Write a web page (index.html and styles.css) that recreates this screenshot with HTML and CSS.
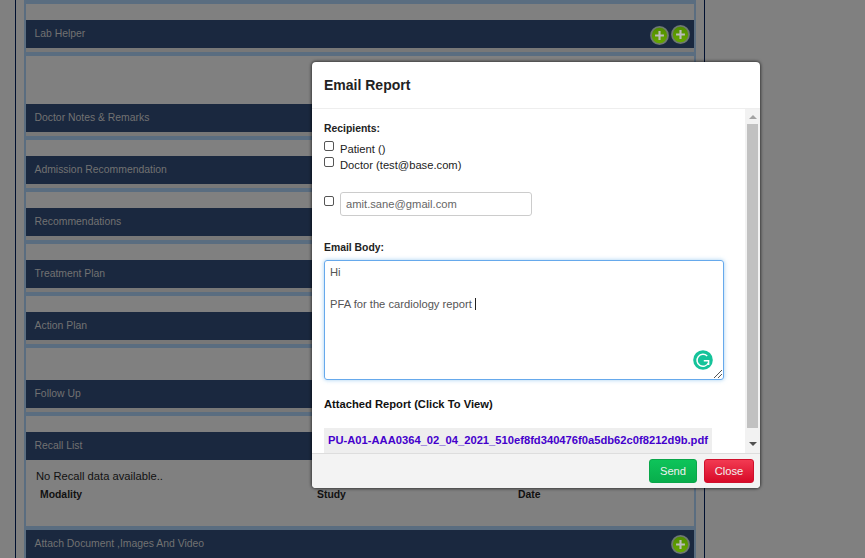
FILE: index.html
```html
<!DOCTYPE html>
<html lang="en">
<head>
<meta charset="utf-8">
<title>Email Report</title>
<link rel="stylesheet" href="styles.css">
</head>
<body>
<svg class="defs" width="0" height="0" aria-hidden="true">
  <defs>
    <linearGradient id="plusFill" x1="0" y1="0" x2="0" y2="1">
      <stop offset="0" stop-color="#4f8c00"/>
      <stop offset="1" stop-color="#68a800"/>
    </linearGradient>
    <symbol id="plus" viewBox="0 0 18 18">
      <circle cx="9" cy="9" r="8.1" fill="url(#plusFill)" stroke="#6f7a70" stroke-width="1.6"/>
      <path d="M9 4.8v8.4M4.8 9h8.4" stroke="#bcbcbc" stroke-width="2" fill="none"/>
    </symbol>
  </defs>
</svg>
<div class="page">
  <main class="sheet">
    <section class="section">
      <div class="bar bar-first"><span>Lab Helper</span><span class="icons"><svg class="plus plus-low"><use href="#plus"/></svg><svg class="plus"><use href="#plus"/></svg></span></div>
      <div class="strip"></div>
    </section>
    <section class="section gap-48">
      <div class="bar"><span>Doctor Notes &amp; Remarks</span></div>
      <div class="strip"></div>
    </section>
    <section class="section gap-16">
      <div class="bar"><span>Admission Recommendation</span></div>
      <div class="strip"></div>
    </section>
    <section class="section gap-16">
      <div class="bar"><span>Recommendations</span></div>
      <div class="strip"></div>
    </section>
    <section class="section gap-16">
      <div class="bar"><span>Treatment Plan</span></div>
      <div class="strip"></div>
    </section>
    <section class="section gap-16">
      <div class="bar"><span>Action Plan</span></div>
      <div class="strip"></div>
    </section>
    <section class="section gap-32">
      <div class="bar"><span>Follow Up</span></div>
      <div class="strip"></div>
    </section>
    <section class="section gap-16">
      <div class="bar"><span>Recall List</span></div>
      <div class="recall">
        <p class="recall-note">No Recall data available..</p>
        <div class="recall-head"><span>Modality</span><span>Study</span><span>Date</span></div>
      </div>
    </section>
    <section class="section-last">
      <div class="bar"><span>Attach Document ,Images And Video</span><span class="icons"><svg class="plus"><use href="#plus"/></svg></span></div>
    </section>
  </main>
</div>
<div class="modal">
  <header class="modal-header"><h2>Email Report</h2></header>
  <div class="modal-middle">
    <div class="modal-body">
      <div class="label">Recipients:</div>
      <label class="check"><input type="checkbox"><span>Patient ()</span></label>
      <label class="check"><input type="checkbox"><span>Doctor (test@base.com)</span></label>
      <div class="other"><input type="checkbox"><div class="email">amit.sane@gmail.com</div></div>
      <div class="label label-body">Email Body:</div>
      <div class="textarea">
        <div class="line">Hi</div>
        <div class="line">&nbsp;</div>
        <div class="line">PFA for the cardiology report<i class="caret"></i></div>
        <svg class="grammarly" viewBox="0 0 20 20" aria-hidden="true">
          <circle cx="10" cy="10" r="9.8" fill="#15c39a"/>
          <path d="M14.2 6A6 6 0 1 0 15.4 13" fill="none" stroke="#fff" stroke-width="1.5"/>
          <path d="M10.8 10.8H15.6V15" fill="none" stroke="#fff" stroke-width="1.5"/>
        </svg>
        <svg class="grip" viewBox="0 0 9 9" aria-hidden="true">
          <path d="M1 9L9 1M5 9L9 5" stroke="#555" stroke-width="1"/>
        </svg>
      </div>
      <div class="attached">Attached Report (Click To View)</div>
      <div class="file"><a href="#">PU-A01-AAA0364_02_04_2021_510ef8fd340476f0a5db62c0f8212d9b.pdf</a></div>
    </div>
    <div class="scrollbar">
      <i class="arrow-up"></i>
      <div class="thumb"></div>
      <i class="arrow-down"></i>
    </div>
  </div>
  <footer class="modal-footer">
    <button class="btn btn-send" type="button">Send</button>
    <button class="btn btn-close" type="button">Close</button>
  </footer>
</div>
</body>
</html>
```
FILE: styles.css
```css
* { box-sizing: border-box; }
html, body { margin: 0; height: 100%; overflow: hidden; }
body { background: #808080; font-family: "Liberation Sans", Arial, sans-serif; }
.defs { position: absolute; }
.page {
  width: 690px;
  height: 558px;
  margin-left: 15px;
  padding: 0 8px;
  border-left: 1px solid #001030;
  border-right: 1px solid #001030;
  overflow: hidden;
}
.sheet {
  width: 672px;
  height: 558px;
  border: 2px solid #5a6d80;
  border-top: 4px solid #5a6d80;
  border-bottom: 0;
}
.section { border-bottom: 4px solid #5a6d80; }
.bar {
  display: flex;
  align-items: center;
  justify-content: space-between;
  height: 28px;
  padding: 0 0 0 8.5px;
  background: #1a283f;
  color: #727272;
  font-size: 10.4px;
}
.bar > span:first-child { position: relative; top: -1px; }
.bar-first { margin-top: 16px; }
.gap-16 { margin-top: 16px; }
.gap-32 { margin-top: 32px; }
.gap-48 { margin-top: 48px; }
.strip { height: 4px; background: #787878; }
.icons { display: flex; align-items: center; gap: 2px; padding-right: 4px; }
.plus { display: block; width: 19px; height: 19px; }
.plus-low { position: relative; top: 1px; }
.recall { height: 66px; padding: 8px 0 0 10px; color: #111; font-size: 11.2px; }
.recall-note { margin: 0; height: 16px; line-height: 16px; font-size: 11.2px; }
.recall-head {
  display: grid;
  grid-template-columns: 277px 201px 1fr;
  padding: 4px 0 0 4px;
  font-size: 10.4px;
  font-weight: bold;
  line-height: 14px;
}
.modal {
  position: absolute;
  left: 312px;
  top: 62px;
  width: 448px;
  height: 426px;
  display: flex;
  flex-direction: column;
  background: #fff;
  border-radius: 4px;
  box-shadow: 0 0 3px 1px rgba(0, 0, 0, .55);
  overflow: hidden;
}
.modal-header { flex: none; height: 47px; padding: 0 12px; border-bottom: 1px solid #eee; display: flex; align-items: center; }
.modal-header h2 { margin: 0; font-size: 14px; font-weight: bold; color: #222; }
.modal-middle { flex: 1; min-height: 0; display: flex; }
.modal-body { flex: 1; min-width: 0; padding: 13px 12px 0; color: #222; font-size: 11.2px; overflow: hidden; }
.label { font-size: 10.4px; font-weight: bold; line-height: 13px; }
.check { display: flex; align-items: flex-start; height: 16px; line-height: 16px; font-size: 11.2px; }
.check:first-of-type { margin-top: 6px; }
input[type="checkbox"] { width: 10px; height: 10px; margin: 0 6px 0 0; flex: none; appearance: none; border: 1px solid #555; border-radius: 2px; background: #fff; }
.other { display: flex; align-items: flex-start; margin-top: 19px; }
.other input { margin-top: 4px; }
.email { width: 192px; height: 24px; padding-left: 5px; line-height: 22px; border: 1px solid #ccc; border-radius: 3px; color: #666; font-size: 11.2px; }
.label-body { margin-top: 25px; }
.textarea {
  position: relative;
  width: 400px;
  height: 120px;
  margin-top: 6px;
  padding: 3px 5px;
  border: 1px solid #66a9ec;
  border-radius: 3px;
  box-shadow: 0 0 4px rgba(102, 175, 233, .6);
  color: #555;
  font-size: 11.2px;
  line-height: 16px;
}
.caret { display: inline-block; width: 1px; height: 12px; margin-left: 3px; background: #222; vertical-align: -2px; }
.grammarly { position: absolute; right: 10px; bottom: 9px; width: 20px; height: 20px; }
.grip { position: absolute; right: 1px; bottom: 1px; width: 9px; height: 9px; }
.attached { margin-top: 17px; font-size: 11.2px; font-weight: bold; line-height: 14px; color: #111; }
.file { width: 388px; height: 26px; margin-top: 17px; padding: 5px 4px; background: #eee; font-size: 11.2px; font-weight: bold; line-height: 14px; }
.file a { color: #4400cc; text-decoration: none; white-space: nowrap; }
.scrollbar { flex: none; width: 15px; display: flex; flex-direction: column; align-items: center; background: #f2f2f2; }
.arrow-up, .arrow-down { display: block; width: 0; height: 0; border-left: 4px solid transparent; border-right: 4px solid transparent; }
.arrow-up { margin-top: 6px; border-bottom: 4px solid #a3a3a3; }
.arrow-down { margin: auto 0 7px; border-top: 4px solid #505050; }
.thumb { width: 11px; height: 304px; margin-top: 5px; background: #c1c1c1; }
.modal-footer { flex: none; height: 35px; display: flex; justify-content: flex-end; gap: 7px; padding: 5px 6px 0 0; background: #f3f3f3; border-top: 1px solid #ddd; }
.btn { height: 24px; padding: 0; border-radius: 3px; color: #f0f0f0; font-family: inherit; font-size: 11.2px; line-height: 22px; }
.btn-send { width: 48px; border: 1px solid #0aa64a; background: linear-gradient(#0ec45a, #08ae4c); }
.btn-close { width: 50px; border: 1px solid #d0102c; background: linear-gradient(#f23a52, #d80a28); }
```
